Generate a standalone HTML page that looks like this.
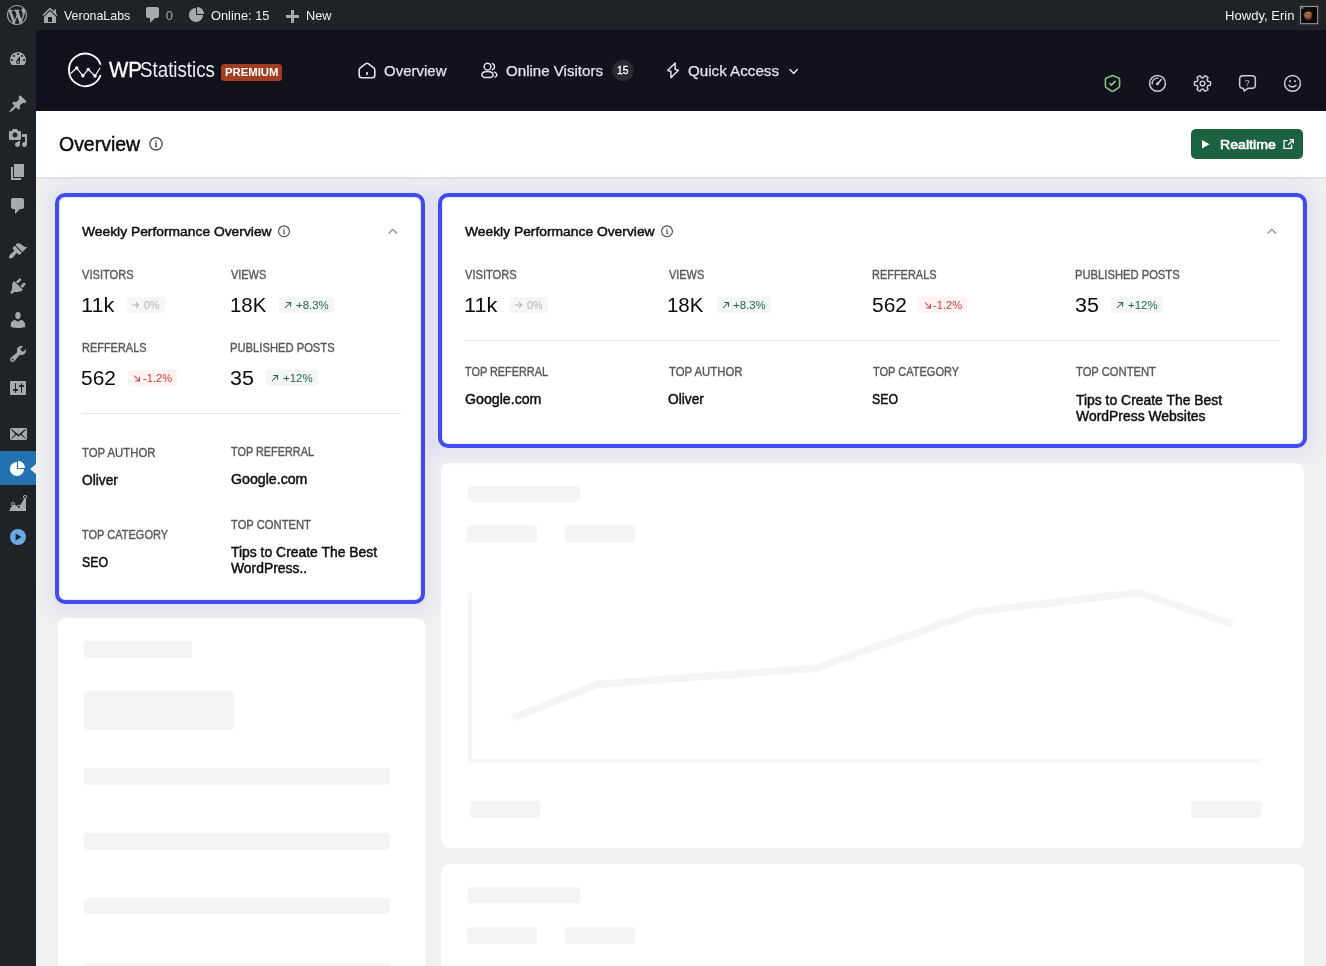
<!DOCTYPE html>
<html lang="en"><head><meta charset="utf-8"><title>Overview - WP Statistics</title>
<style>

html,body{margin:0;padding:0}
body{width:1326px;height:966px;overflow:hidden;position:relative;background:#f0f0f1;font-family:"Liberation Sans",sans-serif;}
#root{position:absolute;left:0;top:0;width:1326px;height:966px;will-change:transform}
.a{position:absolute}
.t{position:absolute;white-space:nowrap;line-height:1;transform-origin:0 50%;font-family:"Liberation Sans",sans-serif}
svg{position:absolute;overflow:visible}
#adminbar{left:0;top:0;width:1326px;height:30px;background:#1d2327}
#sidebar{left:0;top:30px;width:36px;height:936px;background:#1d2327}
#header{left:36px;top:30px;width:1290px;height:81px;background:#12121c}
#titlebar{left:36px;top:111px;width:1290px;height:66px;background:#fff;box-shadow:0 1px 0 #dcdce3, 0 2px 3px rgba(0,0,30,.05)}
.card{background:#fff;border-radius:8px}
.hl{background:#fff;border:4px solid #404bf2;border-radius:10px;box-sizing:border-box;box-shadow:inset 0 0 0 1px #ebebee}
.glow{border-radius:10px;box-shadow:0 0 14px 11px rgba(64,75,242,.06)}
.sk{background:#f4f4f4;border-radius:3px}
.tag{border-radius:3px}
.hr{height:1px;background:#e6e6e8}

</style></head>
<body>
<div id="root">
<div id="adminbar" class="a">
<svg class="a" style="left:7px;top:5px" width="20" height="20" viewBox="0 0 20 20"><path fill="#a7aaad" d="M20 10c0-5.51-4.49-10-10-10C4.48 0 0 4.49 0 10c0 5.52 4.48 10 10 10 5.51 0 10-4.48 10-10zM7.78 15.37L4.37 6.22c.55-.02 1.17-.08 1.17-.08.5-.06.44-1.13-.06-1.11 0 0-1.45.11-2.37.11-.18 0-.37 0-.58-.01C4.12 2.69 6.87 1.11 10 1.11c2.33 0 4.45.87 6.05 2.34-.68-.11-1.65.39-1.65 1.58 0 .74.45 1.36.9 2.1.35.61.55 1.36.55 2.46 0 1.49-1.4 5-1.4 5l-3.03-8.37c.54-.02.82-.17.82-.17.5-.05.44-1.25-.06-1.22 0 0-1.44.12-2.38.12-.87 0-2.33-.12-2.33-.12-.5-.03-.56 1.2-.06 1.22l.92.08 1.26 3.41zM17.41 10c.24-.64.74-1.87.43-4.25.7 1.29 1.05 2.71 1.05 4.25 0 3.29-1.73 6.24-4.4 7.78.97-2.59 1.94-5.2 2.92-7.78zM6.1 18.09C3.12 16.65 1.11 13.53 1.11 10c0-1.3.23-2.48.72-3.59C3.25 10.3 4.67 14.2 6.1 18.09zm4.03-6.63l2.58 6.98c-.86.29-1.76.45-2.71.45-.79 0-1.57-.11-2.29-.33.81-2.38 1.62-4.74 2.42-7.1z"/></svg>
<svg class="a" style="left:40.3px;top:5.4px" width="20" height="20" viewBox="0 0 20 20"><path fill="#a7aaad" d="M16 8.5l1.53 1.53-1.06 1.06L10 4.62l-6.47 6.47-1.06-1.06L10 2.5l4 4v-2h2v4zm-6-2.46l6 5.99V18H4v-5.970zM12 17v-5H8v5h4z"/></svg>
<span class="t" style="left:64.05px;top:9px;font-size:13px;color:#f0f0f1;transform:scaleX(0.9550);">VeronaLabs</span>
<svg class="a" style="left:143px;top:5.4px" width="20" height="20" viewBox="0 0 20 20"><path fill="#a7aaad" d="M5 2h9c1.1 0 2 .9 2 2v7c0 1.1-.9 2-2 2h-2l-5 5v-5H5c-1.1 0-2-.9-2-2V4c0-1.1.9-2 2-2z"/></svg>
<span class="t" style="left:165.80px;top:9px;font-size:13px;color:#a7aaad;">0</span>
<svg class="a" style="left:187.2px;top:4.1px" width="20" height="20" viewBox="0 0 20 20"><path fill="#a7aaad" d="M10 10V3c3.87 0 7 3.13 7 7h-7zM9 4v7h7c0 3.870-3.130 7-7 7s-7-3.130-7-7 3.130-7 7-7z"/></svg>
<span class="t" style="left:210.51px;top:9px;font-size:13px;color:#f0f0f1;transform:scaleX(0.9854);">Online: 15</span>
<svg class="a" style="left:282.4px;top:7.8px" width="20" height="20" viewBox="0 0 20 20"><path fill="#a7aaad" d="M17 7v3h-5v5H9v-5H4V7h5V2h3v5h5z"/></svg>
<span class="t" style="left:305.67px;top:9px;font-size:13px;color:#f0f0f1;transform:scaleX(0.9820);">New</span>
<span class="t" style="left:1224.64px;top:9px;font-size:13px;color:#f0f0f1;transform:scaleX(1.0052);">Howdy, Erin</span>
<svg class="a" style="left:1299px;top:5px" width="20" height="20" viewBox="1299 5 20 20"><defs><radialGradient id="fg" cx="45%" cy="40%" r="60%"><stop offset="0" stop-color="#c48e72"/><stop offset=".55" stop-color="#96603f"/><stop offset="1" stop-color="#3a2114"/></radialGradient><filter id="bl" x="-20%" y="-20%" width="140%" height="140%"><feGaussianBlur stdDeviation=".5"/></filter></defs><rect x="1300.500" y="6.500" width="17.200" height="17.200" fill="#0b0605" stroke="#8c8f94" stroke-width="1.200"/><g filter="url(#bl)"><ellipse cx="1308.100" cy="14.900" rx="4.400" ry="5.500" fill="url(#fg)" transform="rotate(-12 1308.100 14.900)"/><path d="M1304.500 10.500q3-3.500 8 0l1 3q-3-2.500-5.500-2-2.500.5-3.500 3z" fill="#1a0e08"/><ellipse cx="1307.500" cy="14.300" rx="1.300" ry=".600" fill="#4a2a1a"/><ellipse cx="1306.800" cy="18.200" rx="1.200" ry=".500" fill="#5a2f1f"/><rect x="1301.200" y="7.200" width="2.200" height="1.600" fill="#4f9bd6"/></g></svg>
</div>
<div id="sidebar" class="a">
<svg class="a" style="left:8.0px;top:19.0px" width="20" height="20" viewBox="0 0 20 20"><path fill="#a7aaad" d="M3.76 16h12.48c1.1-1.37 1.76-3.11 1.76-5 0-4.42-3.58-8-8-8s-8 3.58-8 8c0 1.89.66 3.63 1.76 5zM10 4c.55 0 1 .45 1 1s-.45 1-1 1-1-.45-1-1 .45-1 1-1zM6 6c.55 0 1 .45 1 1s-.45 1-1 1-1-.45-1-1 .45-1 1-1zm8 0c.55 0 1 .45 1 1s-.45 1-1 1-1-.45-1-1 .45-1 1-1zm-5.370 5.550L12 7v6c0 1.1-.9 2-2 2s-2-.9-2-2c0-.57.24-1.080.63-1.450zM4 10c.55 0 1 .45 1 1s-.45 1-1 1-1-.45-1-1 .45-1 1-1zm12 0c.55 0 1 .45 1 1s-.45 1-1 1-1-.45-1-1 .45-1 1-1zm-5 3c0-.55-.45-1-1-1s-1 .45-1 1 .45 1 1 1 1-.45 1-1z"/></svg>
<svg class="a" style="left:8.0px;top:64.0px" width="20" height="20" viewBox="0 0 20 20"><path fill="#a7aaad" d="M10.44 3.02l1.82-1.82 6.36 6.35-1.83 1.82c-1.05-.68-2.48-.57-3.41.36l-.75.75c-.92.93-1.04 2.35-.35 3.41l-1.83 1.82-2.41-2.41-2.8 2.79c-.42.42-3.38 2.71-3.8 2.29s1.86-3.39 2.28-3.81l2.79-2.79L4.1 9.36l1.83-1.82c1.05.69 2.48.57 3.4-.36l.75-.75c.93-.92 1.05-2.35.36-3.41z"/></svg>
<svg class="a" style="left:8.0px;top:98.0px" width="20" height="20" viewBox="0 0 20 20"><path fill="#a7aaad" d="M13 11V4c0-.55-.45-1-1-1h-1.67L9 1H5L3.67 3H2c-.55 0-1 .45-1 1v7c0 .55.45 1 1 1h10c.55 0 1-.45 1-1zM7 4.5c1.38 0 2.5 1.12 2.5 2.5S8.38 9.5 7 9.5 4.5 8.38 4.5 7 5.62 4.5 7 4.5zM14 6h5v10.5c0 1.38-1.12 2.5-2.5 2.5S14 17.88 14 16.5s1.12-2.5 2.5-2.5c.17 0 .34.02.5.05V9h-3V6zm-4 8.05V13h2v3.5c0 1.38-1.12 2.5-2.5 2.5S7 17.88 7 16.5 8.12 14 9.5 14c.17 0 .34.02.5.05z"/></svg>
<svg class="a" style="left:8.0px;top:132.0px" width="20" height="20" viewBox="0 0 20 20"><path fill="#a7aaad" d="M6 15V2h10v13H6zm-1 1h8v2H3V5h2v11z"/></svg>
<svg class="a" style="left:8.0px;top:166.0px" width="20" height="20" viewBox="0 0 20 20"><path fill="#a7aaad" d="M5 2h9c1.1 0 2 .9 2 2v7c0 1.1-.9 2-2 2h-2l-5 5v-5H5c-1.1 0-2-.9-2-2V4c0-1.1.9-2 2-2z"/></svg>
<svg class="a" style="left:8.0px;top:211.0px" width="20" height="20" viewBox="0 0 20 20"><path fill="#a7aaad" d="M14.48 11.06L7.41 3.99l1.5-1.5c.5-.56 2.3-.47 3.51.32 1.21.8 1.43 1.28 2.91 2.1 1.18.64 2.45 1.26 4.45.85zm-.71.71L6.7 4.7 4.93 6.47c-.39.39-.39 1.02 0 1.41l1.06 1.06c.39.39.39 1.03 0 1.42-.6.6-1.43 1.11-2.21 1.69-.35.26-.7.53-1.01.84C1.43 14.23.4 16.08 1.4 17.07c.99 1 2.84-.03 4.18-1.36.31-.31.58-.66.85-1.02.57-.78 1.08-1.61 1.69-2.21.39-.39 1.02-.39 1.41 0l1.06 1.06c.39.39 1.02.39 1.41 0z"/></svg>
<svg class="a" style="left:8.0px;top:246.0px" width="20" height="20" viewBox="0 0 20 20"><path fill="#a7aaad" d="M13.11 4.36L9.87 7.6 8 5.73l3.24-3.24c.35-.34 1.05-.2 1.56.32.52.51.66 1.21.31 1.55zm-8 1.77l.91-1.12 9.01 9.01-1.19.84c-.71.71-2.63 1.16-3.82 1.16H6.14L4.9 17.26c-.59.59-1.54.59-2.12 0-.59-.58-.59-1.53 0-2.12l1.24-1.24v-3.88c0-1.13.4-3.19 1.09-3.89zm7.26 3.97l3.24-3.24c.34-.35 1.04-.21 1.55.31.52.51.66 1.21.31 1.55l-3.24 3.25z"/></svg>
<svg class="a" style="left:8.0px;top:280.0px" width="20" height="20" viewBox="0 0 20 20"><path fill="#a7aaad" d="M10 9.25c-2.27 0-2.73-3.44-2.73-3.44C7 4.02 7.82 2 9.97 2c2.16 0 2.98 2.02 2.71 3.81 0 0-.41 3.44-2.68 3.44zm0 2.57L12.72 10c2.39 0 4.52 2.33 4.52 4.53v2.49s-3.65 1.13-7.24 1.13c-3.65 0-7.24-1.13-7.24-1.13v-2.49c0-2.25 1.94-4.48 4.47-4.48z"/></svg>
<svg class="a" style="left:8.0px;top:314.0px" width="20" height="20" viewBox="0 0 20 20"><path fill="#a7aaad" d="M16.68 9.77c-1.34 1.34-3.3 1.67-4.95.99l-5.41 6.52c-.99.99-2.59.99-3.58 0s-.99-2.59 0-3.57l6.52-5.42c-.68-1.65-.35-3.61.99-4.95 1.28-1.28 3.12-1.62 4.72-1.06l-2.89 2.89 2.82 2.82 2.86-2.87c.53 1.58.18 3.39-1.08 4.65zM3.81 16.21c.4.39 1.04.39 1.43 0 .4-.4.4-1.04 0-1.43-.39-.4-1.03-.4-1.43 0-.39.39-.39 1.03 0 1.43z"/></svg>
<svg class="a" style="left:8.0px;top:348.0px" width="20" height="20" viewBox="0 0 20 20"><path fill="#a7aaad" d="M18 16V4c0-.55-.45-1-1-1H3c-.55 0-1 .45-1 1v12c0 .55.45 1 1 1h14c.55 0 1-.45 1-1zM8 11h1c.55 0 1 .45 1 1s-.45 1-1 1H8v1.5c0 .28-.22.5-.5.5s-.5-.22-.5-.5V13H6c-.55 0-1-.45-1-1s.45-1 1-1h1V5.500c0-.28.22-.5.5-.5s.5.22.5.5V11zm5-2h-1c-.55 0-1-.45-1-1s.45-1 1-1h1V5.500c0-.28.22-.5.5-.5s.5.22.5.5V7h1c.55 0 1 .45 1 1s-.45 1-1 1h-1v5.500c0 .28-.22.5-.5.5s-.5-.22-.5-.5V9z"/></svg>
<svg class="a" style="left:8.0px;top:394.0px" width="20" height="20" viewBox="0 0 20 20"><path fill="#a7aaad" d="M19 14.5v-9c0-.83-.67-1.5-1.500-1.500H3.490c-.83 0-1.500.67-1.500 1.500v9c0 .83.67 1.500 1.500 1.500H17.500c.83 0 1.500-.67 1.500-1.500zm-1.310-9.110c.33.33.15.67-.03.84L13.600 9.950l3.900 4.060c.12.14.2.36.06.51-.13.16-.43.15-.56.05l-4.370-3.730-2.140 1.950-2.130-1.950-4.370 3.730c-.13.1-.43.11-.56-.05-.14-.15-.06-.37.06-.51l3.900-4.060-4.060-3.720c-.18-.17-.36-.51-.03-.84s.67-.17.95.07l6.240 5.040 6.250-5.040c.28-.24.62-.4.95-.07z"/></svg>
<div class="a" style="left:0;top:421px;width:36px;height:34px;background:#2271b1"></div>
<div class="a" style="left:30px;top:434px;width:0;height:0;border-top:5px solid transparent;border-bottom:5px solid transparent;border-right:6px solid #eeeef2"></div>
<svg class="a" style="left:8.0px;top:428.0px" width="20" height="20" viewBox="0 0 20 20"><path fill="#fff" d="M10 10V3c3.87 0 7 3.13 7 7h-7zM9 4v7h7c0 3.870-3.130 7-7 7s-7-3.130-7-7 3.130-7 7-7z"/></svg>
<svg class="a" style="left:8.0px;top:462.5px" width="20" height="20" viewBox="0 0 20 20"><path fill="#a7aaad" d="M18 18l.01-12.280c.59-.35.99-.99.99-1.720 0-1.100-.9-2-2-2s-2 .9-2 2c0 .8.47 1.480 1.140 1.800l-4.130 6.580c-.33-.24-.73-.38-1.160-.38-.84 0-1.550.51-1.850 1.240l-2.140-1.530c.09-.22.14-.46.14-.71 0-1.110-.89-2-2-2-1.100 0-2 .89-2 2 0 .73.4 1.360.98 1.710L1 18h17zM17 3c.55 0 1 .45 1 1s-.45 1-1 1-1-.45-1-1 .45-1 1-1zM5 10c.55 0 1 .45 1 1s-.45 1-1 1-1-.45-1-1 .45-1 1-1zm5.850 3c.55 0 1 .45 1 1s-.45 1-1 1-1-.45-1-1 .45-1 1-1z"/></svg>
<svg class="a" style="left:10.100px;top:498.600px" width="16" height="16" viewBox="0 0 16 16"><circle cx="8" cy="8" r="8" fill="#6aa9e4"/><path d="M5.600 4.500v7l6-3.500z" fill="#1d2327"/></svg>
</div>
<div id="header" class="a"></div>
<svg class="a" style="left:62px;top:48px" width="50" height="44" viewBox="62 48 50 44" fill="none" stroke="#fff" stroke-linecap="butt" stroke-linejoin="round"><path stroke-width="1.800" d="M100.66 64.73A16.3 16.3 0 1 0 100.66 75.07"/><path stroke-width="1.150" d="M70.4 73.7 L76.8 68.0 L82.9 75.8 L88.3 69.4 L95.0 76.0 L100.0 68.0"/><circle cx="76.8" cy="68.0" r="1.700" fill="#fff" stroke="none"/><circle cx="82.9" cy="75.8" r="1.700" fill="#fff" stroke="none"/><circle cx="88.3" cy="69.4" r="1.700" fill="#fff" stroke="none"/><circle cx="95.0" cy="76.0" r="1.700" fill="#fff" stroke="none"/></svg>
<span class="t" style="left:108.50px;top:60px;font-size:21.4px;color:#fff;transform:scaleX(0.9564);-webkit-text-stroke:.4px #fff;">WP</span><span class="t" style="left:140.47px;top:60px;font-size:21.4px;color:#ececf0;transform:scaleX(0.8760);">Statistics</span>
<div class="a" style="left:221px;top:64px;width:61px;height:17px;border-radius:3.500px;background:#a33d21"></div>
<span class="t" style="left:224.63px;top:67px;font-size:11px;color:#fff;font-weight:700;transform:scaleX(1.0297);">PREMIUM</span>
<svg class="a" style="left:356px;top:60px" width="22" height="20" viewBox="356 60 22 20" fill="none" stroke="#e3e4e8" stroke-width="1.600" stroke-linejoin="round" stroke-linecap="round"><path d="M365.800 63.700Q367 62.800 368.200 63.700L374 68.100Q374.800 68.800 374.800 69.900V75.200Q374.800 77.700 372.300 77.700H361.700Q359.200 77.700 359.200 75.200V69.900Q359.200 68.800 360 68.100Z"/><path d="M367 72v3" stroke-linecap="butt" stroke-width="1.700"/></svg>
<span class="t" style="left:384.00px;top:64px;font-size:14.5px;color:#e3e4e8;transform:scaleX(1.0335);-webkit-text-stroke:.25px #e3e4e8;">Overview</span>
<svg class="a" style="left:480px;top:61px" width="18" height="18" viewBox="0 0 24 24" fill="none" stroke="#e3e4e8" stroke-width="2" stroke-linejoin="round" stroke-linecap="round"><circle cx="10" cy="7.500" r="4.500"/><path d="M2.500 18.500c0-3 3.300-4.500 7.500-4.500s7.500 1.500 7.500 4.500c0 2.500-3.300 3.500-7.500 3.500s-7.500-1-7.500-3.500z"/><path d="M16.500 3.300a4.500 4.500 0 0 1 0 8.400M19.500 14.800c1.800.8 3 2 3 3.700 0 1.300-.9 2.200-2.300 2.800"/></svg>
<span class="t" style="left:505.90px;top:64px;font-size:14.5px;color:#e3e4e8;transform:scaleX(1.0408);-webkit-text-stroke:.25px #e3e4e8;">Online Visitors</span>
<svg class="a" style="left:610px;top:58px" width="26" height="26" viewBox="610 58 26 26"><circle cx="623.050" cy="70.450" r="10.650" fill="#2a2b35"/></svg>
<span class="t" style="left:617.25px;top:65px;font-size:11px;color:#fff;transform:scaleX(0.9450);-webkit-text-stroke:.3px #fff;">15</span>
<svg class="a" style="left:662px;top:58px" width="22" height="24" viewBox="662 58 22 24" fill="none" stroke="#e3e4e8" stroke-width="1.500" stroke-linejoin="round" stroke-linecap="round"><path d="M675.100 63L667.700 70.500 670.900 71.400V77.700L678.400 70.200 675.100 69.300Z"/></svg>
<span class="t" style="left:687.99px;top:64px;font-size:14.5px;color:#e3e4e8;transform:scaleX(1.0454);-webkit-text-stroke:.25px #e3e4e8;">Quick Access</span>
<svg class="a" style="left:789px;top:68px" width="10" height="7" viewBox="0 0 10 7" fill="none" stroke="#e3e4e8" stroke-width="1.500" stroke-linejoin="round" stroke-linecap="round"><path d="M1 1.600l3.650 3.900 3.650-3.900"/></svg>
<svg class="a" style="left:1095px;top:68px" width="215" height="32" viewBox="1095 68 215 32" fill="none" stroke="#cdced3" stroke-width="1.500" stroke-linejoin="round" stroke-linecap="round"><path stroke="#8bc083" stroke-width="1.600" d="M1112.500 75.600L1118.600 77.900Q1119.600 78.300 1119.600 79.400L1119.600 85.500Q1119.600 87 1118.300 87.900L1113.600 91Q1112.500 91.600 1111.400 91L1106.700 87.900Q1105.400 87 1105.400 85.500L1105.400 79.400Q1105.400 78.300 1106.400 77.900Z"/><path stroke="#8bc083" stroke-width="1.700" stroke-linecap="butt" stroke-linejoin="miter" d="M1109.300 83.200L1111.500 85.100 1115.500 80.900"/><circle cx="1157.500" cy="83.400" r="7.900"/><path stroke-width="1.300" d="M1152.200 84.200A5.350 5.350 0 0 1 1158 78.100"/><circle cx="1157.500" cy="83.700" r="1.500" fill="#cdced3" stroke="none"/><path d="M1157.800 83.400L1161.300 79.600"/><path stroke-width="1.450" stroke-linejoin="round" d="M1210.60 83.50 L1210.59 83.85 L1210.57 84.21 L1210.53 84.56 L1210.48 84.91 L1210.39 85.25 L1209.56 85.39 L1208.73 85.47 L1207.96 85.49 L1207.86 85.72 L1207.76 85.95 L1207.64 86.18 L1207.52 86.40 L1207.39 86.62 L1207.25 86.83 L1207.10 87.03 L1206.95 87.24 L1207.32 87.91 L1207.67 88.67 L1207.96 89.46 L1207.71 89.70 L1207.43 89.93 L1207.15 90.14 L1206.85 90.33 L1206.55 90.51 L1206.24 90.68 L1205.92 90.84 L1205.60 90.98 L1205.27 91.11 L1204.93 91.21 L1204.39 90.56 L1203.91 89.88 L1203.51 89.23 L1203.26 89.25 L1203.01 89.28 L1202.75 89.29 L1202.50 89.30 L1202.25 89.29 L1201.99 89.28 L1201.74 89.25 L1201.49 89.23 L1201.09 89.88 L1200.61 90.56 L1200.07 91.21 L1199.73 91.11 L1199.40 90.98 L1199.08 90.84 L1198.76 90.68 L1198.45 90.51 L1198.15 90.33 L1197.85 90.14 L1197.57 89.93 L1197.29 89.70 L1197.04 89.46 L1197.33 88.67 L1197.68 87.91 L1198.05 87.24 L1197.90 87.03 L1197.75 86.83 L1197.61 86.62 L1197.48 86.40 L1197.36 86.18 L1197.24 85.95 L1197.14 85.72 L1197.04 85.49 L1196.27 85.47 L1195.44 85.39 L1194.61 85.25 L1194.52 84.91 L1194.47 84.56 L1194.43 84.21 L1194.41 83.85 L1194.40 83.50 L1194.41 83.15 L1194.43 82.79 L1194.47 82.44 L1194.52 82.09 L1194.61 81.75 L1195.44 81.61 L1196.27 81.53 L1197.04 81.51 L1197.14 81.28 L1197.24 81.05 L1197.36 80.82 L1197.48 80.60 L1197.61 80.38 L1197.75 80.17 L1197.90 79.97 L1198.05 79.76 L1197.68 79.09 L1197.33 78.33 L1197.04 77.54 L1197.29 77.30 L1197.57 77.07 L1197.85 76.86 L1198.15 76.67 L1198.45 76.49 L1198.76 76.32 L1199.08 76.16 L1199.40 76.02 L1199.73 75.89 L1200.07 75.79 L1200.61 76.44 L1201.09 77.12 L1201.49 77.77 L1201.74 77.75 L1201.99 77.72 L1202.25 77.71 L1202.50 77.70 L1202.75 77.71 L1203.01 77.72 L1203.26 77.75 L1203.51 77.77 L1203.91 77.12 L1204.39 76.44 L1204.93 75.79 L1205.27 75.89 L1205.60 76.02 L1205.92 76.16 L1206.24 76.32 L1206.55 76.49 L1206.85 76.67 L1207.15 76.86 L1207.43 77.07 L1207.71 77.30 L1207.96 77.54 L1207.67 78.33 L1207.32 79.09 L1206.95 79.76 L1207.10 79.97 L1207.25 80.17 L1207.39 80.38 L1207.52 80.60 L1207.64 80.82 L1207.76 81.05 L1207.86 81.28 L1207.96 81.51 L1208.73 81.53 L1209.56 81.61 L1210.39 81.75 L1210.48 82.09 L1210.53 82.44 L1210.57 82.79 L1210.59 83.15Z"/><circle cx="1202.500" cy="83.500" r="2.400" stroke-width="1.400"/><path d="M1243 75.650h9a3.350 3.350 0 0 1 3.350 3.350v6a3.350 3.350 0 0 1 -3.350 3.350h-4.300l-3.500 2.700-.9-2.700h-.300a3.350 3.350 0 0 1 -3.350 -3.350v-6a3.350 3.350 0 0 1 3.350 -3.350z"/><circle cx="1292.500" cy="83.400" r="7.900"/><path d="M1288.900 85.300Q1292.500 88.700 1296.100 85.300"/><rect x="1289.100" y="80.300" width="1.800" height="1.800" fill="#cdced3" stroke="none"/><rect x="1294.100" y="80.300" width="1.800" height="1.800" fill="#cdced3" stroke="none"/></svg>
<span class="t" style="left:1244.85px;top:79px;font-size:9px;color:#cdced3;">?</span>
<div id="titlebar" class="a"></div>
<span class="t" style="left:59.00px;top:134px;font-size:20px;color:#0c0c0d;transform:scaleX(0.9733);-webkit-text-stroke:.45px #0c0c0d;">Overview</span>
<svg class="a" style="left:147px;top:135px" width="17" height="17" viewBox="147 135 17 17" fill="none" stroke="#45474b" stroke-width="1.3"><circle cx="156.00" cy="143.85" r="6.15"/><path d="M155.45 141.27h1.100M155.00 143.23H156.00V146.56H157.10"/></svg>
<div class="a" style="left:1191px;top:129px;width:112px;height:30px;border-radius:5px;background:#1b6243"></div>
<svg class="a" style="left:1201.500px;top:140px" width="8" height="9" viewBox="0 0 8 9"><path d="M0 0l7.500 4.250L0 8.500z" fill="#fff"/></svg>
<span class="t" style="left:1219.65px;top:138px;font-size:13.5px;color:#fff;transform:scaleX(1.0475);-webkit-text-stroke:.6px #fff;">Realtime</span>
<svg class="a" style="left:1283px;top:139px" width="11" height="10" viewBox="0 0 11 10" fill="none" stroke="#fff" stroke-width="1.300"><path d="M4.500 1.700H1v7.600h7.600V5.800"/><path d="M6.500 .700h3.800v3.800M10.300 .700L5 6"/></svg>
<div class="a card" style="left:58px;top:618px;width:367px;height:360px"></div>
<div class="a sk" style="left:84px;top:640.6px;width:108px;height:17.0px"></div>
<div class="a sk" style="left:84px;top:691px;width:150.3px;height:39.4px"></div>
<div class="a sk" style="left:84px;top:768.2px;width:306px;height:16.7px"></div>
<div class="a sk" style="left:84px;top:833.1px;width:306px;height:16.7px"></div>
<div class="a sk" style="left:84px;top:897.8px;width:306px;height:16.7px"></div>
<div class="a sk" style="left:84px;top:962.6px;width:306px;height:16.7px"></div>
<div class="a card" style="left:441px;top:463px;width:863px;height:385px"></div>
<div class="a sk" style="left:468px;top:485.8px;width:112px;height:16.6px"></div>
<div class="a sk" style="left:467px;top:525px;width:70px;height:17px"></div>
<div class="a sk" style="left:565px;top:525px;width:70px;height:17px"></div>
<svg class="a" style="left:441px;top:463px" width="863" height="386" viewBox="441 463 863 386" fill="none" stroke="#f5f5f5"><path d="M470 593V760.700H1261" stroke-width="4.500"/><path d="M512.400 718.200L598.400 684.300 815.100 668.200 977.300 611.400 1139.500 592.500 1232.700 624.200" stroke-width="7.500"/></svg>
<div class="a sk" style="left:470px;top:800.9px;width:69.5px;height:16.7px"></div>
<div class="a sk" style="left:1191px;top:800.9px;width:70px;height:16.7px"></div>
<div class="a card" style="left:441px;top:864px;width:863px;height:120px"></div>
<div class="a sk" style="left:468px;top:887.2px;width:112px;height:16.2px"></div>
<div class="a sk" style="left:467px;top:927px;width:70px;height:17px"></div>
<div class="a sk" style="left:565px;top:927px;width:70px;height:17px"></div>
<div class="a glow" style="left:55px;top:193px;width:370px;height:410.500px"></div><div class="a glow" style="left:438px;top:193px;width:868.500px;height:254.500px"></div>
<div class="a hl" style="left:55px;top:193px;width:370px;height:410.500px"></div>
<span class="t" style="left:82.47px;top:225px;font-size:13.5px;color:#0c0c0d;transform:scaleX(1.0243);-webkit-text-stroke:.45px #0c0c0d;">Weekly Performance Overview</span>
<svg class="a" style="left:276px;top:223px" width="15" height="15" viewBox="276 223 15 15" fill="none" stroke="#45474b" stroke-width="1.1"><circle cx="284.00" cy="231.35" r="5.45"/><path d="M283.45 229.06h1.100M283.00 230.81H284.00V233.75H285.10"/></svg>
<svg class="a" style="left:387.7px;top:228.2px" width="10" height="7" viewBox="0 0 10 7" fill="none" stroke="#858b96" stroke-width="1.200" stroke-linecap="butt" stroke-linejoin="miter"><path d="M.600 5.500L4.800 1.300 9 5.500"/></svg>
<span class="t" style="left:82.43px;top:269px;font-size:12px;color:#56585a;transform:scaleX(0.9246);-webkit-text-stroke:.36px #56585a;">VISITORS</span><span class="t" style="left:80.67px;top:295px;font-size:20px;color:#0c0c0d;transform:scaleX(1.0838);">11k</span><div class="a tag" style="left:127px;top:297.4px;width:37.8px;height:15.9px;background:#f6f6f7"></div><svg class="a" style="left:131.40px;top:300.20px" width="10" height="10" viewBox="0 0 10 10" fill="none" stroke="#b3b5b8" stroke-width="1.050"><path d="M1 5h6.700M4.800 2.200l2.900 2.800-2.900 2.800"/></svg><span class="t" style="left:144.21px;top:300px;font-size:11px;color:#b3b5b8;transform:scaleX(0.9735);">0%</span>
<span class="t" style="left:231.33px;top:269px;font-size:12px;color:#56585a;transform:scaleX(0.9104);-webkit-text-stroke:.36px #56585a;">VIEWS</span><span class="t" style="left:229.67px;top:295px;font-size:20px;color:#0c0c0d;transform:scaleX(1.0222);">18K</span><div class="a tag" style="left:279px;top:297.4px;width:54.5px;height:15.9px;background:#f3f6f4"></div><svg class="a" style="left:283.80px;top:300.90px" width="10" height="10" viewBox="0 0 10 10" fill="none" stroke="#1e6a45" stroke-width="1.050"><path d="M1 7l5.500-5.500M2.200 1.500h4.300v4.300"/></svg><span class="t" style="left:295.63px;top:300px;font-size:11px;color:#1e6a45;transform:scaleX(1.0376);">+8.3%</span>
<span class="t" style="left:81.57px;top:342px;font-size:12px;color:#56585a;transform:scaleX(0.9131);-webkit-text-stroke:.36px #56585a;">REFFERALS</span><span class="t" style="left:81.46px;top:368px;font-size:20px;color:#0c0c0d;transform:scaleX(1.0460);">562</span><div class="a tag" style="left:128px;top:370.4px;width:48.9px;height:15.9px;background:#fdf3f2"></div><svg class="a" style="left:133.30px;top:373.90px" width="10" height="10" viewBox="0 0 10 10" fill="none" stroke="#d63d38" stroke-width="1.050"><path d="M1 1.500l5.500 5.500M2.200 7h4.300V2.700"/></svg><span class="t" style="left:142.69px;top:373px;font-size:11px;color:#d63d38;transform:scaleX(1.0126);">-1.2%</span>
<span class="t" style="left:230.45px;top:342px;font-size:12px;color:#56585a;transform:scaleX(0.9343);-webkit-text-stroke:.36px #56585a;">PUBLISHED POSTS</span><span class="t" style="left:230.39px;top:368px;font-size:20px;color:#0c0c0d;transform:scaleX(1.0751);">35</span><div class="a tag" style="left:266px;top:370.4px;width:51.8px;height:15.9px;background:#f3f6f4"></div><svg class="a" style="left:270.80px;top:373.90px" width="10" height="10" viewBox="0 0 10 10" fill="none" stroke="#1e6a45" stroke-width="1.050"><path d="M1 7l5.500-5.500M2.200 1.500h4.300v4.300"/></svg><span class="t" style="left:282.83px;top:373px;font-size:11px;color:#1e6a45;transform:scaleX(1.0436);">+12%</span>
<div class="a hr" style="left:82px;top:413px;width:319px"></div>
<span class="t" style="left:82.24px;top:447px;font-size:12px;color:#56585a;transform:scaleX(0.9464);-webkit-text-stroke:.36px #56585a;">TOP AUTHOR</span><span class="t" style="left:81.89px;top:473px;font-size:14px;color:#0c0c0d;transform:scaleX(0.9818);-webkit-text-stroke:.45px #0c0c0d;">Oliver</span>
<span class="t" style="left:231.15px;top:446px;font-size:12px;color:#56585a;transform:scaleX(0.9064);-webkit-text-stroke:.36px #56585a;">TOP REFERRAL</span><span class="t" style="left:230.72px;top:472px;font-size:14px;color:#0c0c0d;transform:scaleX(1.0122);-webkit-text-stroke:.45px #0c0c0d;">Google.com</span>
<span class="t" style="left:82.25px;top:529px;font-size:12px;color:#56585a;transform:scaleX(0.9179);-webkit-text-stroke:.36px #56585a;">TOP CATEGORY</span><span class="t" style="left:81.95px;top:555px;font-size:14px;color:#0c0c0d;transform:scaleX(0.8796);-webkit-text-stroke:.45px #0c0c0d;">SEO</span>
<span class="t" style="left:231.15px;top:519px;font-size:12px;color:#56585a;transform:scaleX(0.9340);-webkit-text-stroke:.36px #56585a;">TOP CONTENT</span><span class="t" style="left:231.13px;top:545px;font-size:14px;color:#0c0c0d;transform:scaleX(0.9935);-webkit-text-stroke:.45px #0c0c0d;">Tips to Create The Best</span>
<span class="t" style="left:231.38px;top:561px;font-size:14px;color:#0c0c0d;transform:scaleX(0.9914);-webkit-text-stroke:.45px #0c0c0d;">WordPress..</span>
<div class="a hl" style="left:438px;top:193px;width:868.500px;height:254.500px"></div>
<span class="t" style="left:465.47px;top:225px;font-size:13.5px;color:#0c0c0d;transform:scaleX(1.0243);-webkit-text-stroke:.45px #0c0c0d;">Weekly Performance Overview</span>
<svg class="a" style="left:659px;top:223px" width="15" height="15" viewBox="659 223 15 15" fill="none" stroke="#45474b" stroke-width="1.1"><circle cx="667.00" cy="231.35" r="5.45"/><path d="M666.45 229.06h1.100M666.00 230.81H667.00V233.75H668.10"/></svg>
<svg class="a" style="left:1267px;top:228.2px" width="10" height="7" viewBox="0 0 10 7" fill="none" stroke="#858b96" stroke-width="1.200" stroke-linecap="butt" stroke-linejoin="miter"><path d="M.600 5.500L4.800 1.300 9 5.500"/></svg>
<span class="t" style="left:465.43px;top:269px;font-size:12px;color:#56585a;transform:scaleX(0.9246);-webkit-text-stroke:.36px #56585a;">VISITORS</span><span class="t" style="left:463.67px;top:295px;font-size:20px;color:#0c0c0d;transform:scaleX(1.0838);">11k</span><div class="a tag" style="left:510.0px;top:297.4px;width:37.8px;height:15.9px;background:#f6f6f7"></div><svg class="a" style="left:514.40px;top:300.20px" width="10" height="10" viewBox="0 0 10 10" fill="none" stroke="#b3b5b8" stroke-width="1.050"><path d="M1 5h6.700M4.800 2.200l2.900 2.800-2.900 2.800"/></svg><span class="t" style="left:527.21px;top:300px;font-size:11px;color:#b3b5b8;transform:scaleX(0.9735);">0%</span>
<span class="t" style="left:669.03px;top:269px;font-size:12px;color:#56585a;transform:scaleX(0.9104);-webkit-text-stroke:.36px #56585a;">VIEWS</span><span class="t" style="left:667.37px;top:295px;font-size:20px;color:#0c0c0d;transform:scaleX(1.0222);">18K</span><div class="a tag" style="left:716.6999999999999px;top:297.4px;width:54.5px;height:15.9px;background:#f3f6f4"></div><svg class="a" style="left:721.50px;top:300.90px" width="10" height="10" viewBox="0 0 10 10" fill="none" stroke="#1e6a45" stroke-width="1.050"><path d="M1 7l5.500-5.500M2.200 1.500h4.300v4.300"/></svg><span class="t" style="left:733.33px;top:300px;font-size:11px;color:#1e6a45;transform:scaleX(1.0376);">+8.3%</span>
<span class="t" style="left:871.87px;top:269px;font-size:12px;color:#56585a;transform:scaleX(0.9131);-webkit-text-stroke:.36px #56585a;">REFFERALS</span><span class="t" style="left:871.76px;top:295px;font-size:20px;color:#0c0c0d;transform:scaleX(1.0460);">562</span><div class="a tag" style="left:918.3000000000001px;top:297.4px;width:48.9px;height:15.9px;background:#fdf3f2"></div><svg class="a" style="left:923.60px;top:300.90px" width="10" height="10" viewBox="0 0 10 10" fill="none" stroke="#d63d38" stroke-width="1.050"><path d="M1 1.500l5.500 5.500M2.200 7h4.300V2.700"/></svg><span class="t" style="left:932.99px;top:300px;font-size:11px;color:#d63d38;transform:scaleX(1.0126);">-1.2%</span>
<span class="t" style="left:1075.45px;top:269px;font-size:12px;color:#56585a;transform:scaleX(0.9343);-webkit-text-stroke:.36px #56585a;">PUBLISHED POSTS</span><span class="t" style="left:1075.39px;top:295px;font-size:20px;color:#0c0c0d;transform:scaleX(1.0751);">35</span><div class="a tag" style="left:1111.0px;top:297.4px;width:51.8px;height:15.9px;background:#f3f6f4"></div><svg class="a" style="left:1115.80px;top:300.90px" width="10" height="10" viewBox="0 0 10 10" fill="none" stroke="#1e6a45" stroke-width="1.050"><path d="M1 7l5.500-5.500M2.200 1.500h4.300v4.300"/></svg><span class="t" style="left:1127.83px;top:300px;font-size:11px;color:#1e6a45;transform:scaleX(1.0436);">+12%</span>
<div class="a hr" style="left:465px;top:340px;width:814px"></div>
<span class="t" style="left:465.25px;top:366px;font-size:12px;color:#56585a;transform:scaleX(0.9064);-webkit-text-stroke:.36px #56585a;">TOP REFERRAL</span><span class="t" style="left:464.82px;top:392px;font-size:14px;color:#0c0c0d;transform:scaleX(1.0122);-webkit-text-stroke:.45px #0c0c0d;">Google.com</span>
<span class="t" style="left:668.84px;top:366px;font-size:12px;color:#56585a;transform:scaleX(0.9464);-webkit-text-stroke:.36px #56585a;">TOP AUTHOR</span><span class="t" style="left:668.49px;top:392px;font-size:14px;color:#0c0c0d;transform:scaleX(0.9818);-webkit-text-stroke:.45px #0c0c0d;">Oliver</span>
<span class="t" style="left:872.55px;top:366px;font-size:12px;color:#56585a;transform:scaleX(0.9179);-webkit-text-stroke:.36px #56585a;">TOP CATEGORY</span><span class="t" style="left:872.25px;top:392px;font-size:14px;color:#0c0c0d;transform:scaleX(0.8796);-webkit-text-stroke:.45px #0c0c0d;">SEO</span>
<span class="t" style="left:1076.15px;top:366px;font-size:12px;color:#56585a;transform:scaleX(0.9340);-webkit-text-stroke:.36px #56585a;">TOP CONTENT</span><span class="t" style="left:1076.13px;top:393px;font-size:14px;color:#0c0c0d;transform:scaleX(0.9935);-webkit-text-stroke:.45px #0c0c0d;">Tips to Create The Best</span>
<span class="t" style="left:1076.38px;top:409px;font-size:14px;color:#0c0c0d;transform:scaleX(0.9946);-webkit-text-stroke:.45px #0c0c0d;">WordPress Websites</span>
</div>
</body></html>
